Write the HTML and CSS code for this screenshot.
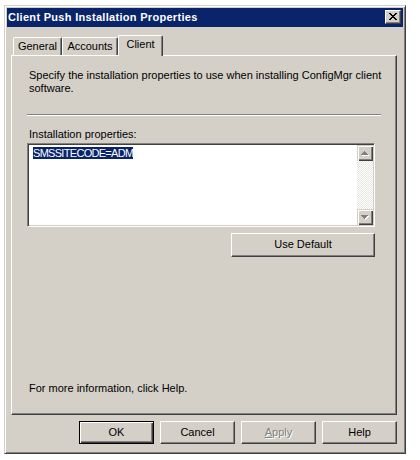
FILE: index.html
```html
<!DOCTYPE html>
<html lang="en">
<head>
    <meta charset="UTF-8">
    <title>Client Push Installation Properties</title>
    <link rel="stylesheet" href="styles.css">
</head>
<body>
    <div class="window">
        <div class="titlebar">
            <span class="title">Client Push Installation Properties</span>
            <div class="close-btn">
                <svg width="8" height="7" viewBox="0 0 8 7"><path fill="#000" d="M0 0h2v1H0zM6 0h2v1H6zM1 1h2v1H1zM5 1h2v1H5zM2 2h4v1H2zM3 3h2v1H3zM2 4h4v1H2zM1 5h2v1H1zM5 5h2v1H5zM0 6h2v1H0zM6 6h2v1H6z"/></svg>
            </div>
        </div>

        <div class="tabs">
            <div class="tab tab-general">General</div>
            <div class="tab tab-accounts">Accounts</div>
            <div class="tab tab-client active">Client</div>
        </div>

        <div class="panel">
            <p class="intro">Specify the installation properties to use when installing ConfigMgr client software.</p>
            <div class="separator"></div>
            <div class="label">Installation properties:</div>
            <div class="editbox">
                <div class="edit-text"><span class="selected">SMSSITECODE=ADM</span></div>
                <div class="scrollbar">
                    <div class="scroll-btn">
                        <svg width="16" height="16" viewBox="0 0 16 16">
                            <path fill="#fff" transform="translate(1 1)" d="M7 6h1v1h1v1h1v1h1v1H4V9h1V8h1V7h1z"/>
                            <path fill="#808080" d="M7 6h1v1h1v1h1v1h1v1H4V9h1V8h1V7h1z"/>
                        </svg>
                    </div>
                    <div class="scroll-track"></div>
                    <div class="scroll-btn">
                        <svg width="16" height="16" viewBox="0 0 16 16">
                            <path fill="#fff" transform="translate(1 1)" d="M4 6h7v1h-1v1h-1v1h-1v1H7V9H6V8H5V7H4z"/>
                            <path fill="#808080" d="M4 6h7v1h-1v1h-1v1h-1v1H7V9H6V8H5V7H4z"/>
                        </svg>
                    </div>
                </div>
            </div>
            <div class="btn btn-wide">Use Default</div>
            <p class="info">For more information, click Help.</p>
        </div>

        <div class="buttons">
            <div class="btn btn-default">OK</div>
            <div class="btn">Cancel</div>
            <div class="btn disabled"><u>A</u>pply</div>
            <div class="btn">Help</div>
        </div>
    </div>
</body>
</html>
```

FILE: styles.css
```css
body {
    margin: 0;
    background-color: #fff;
    font-family: 'Liberation Sans', Arial, sans-serif;
    font-size: 11px;
    line-height: 13px;
    color: #000;
}
.window {
    box-sizing: border-box;
    width: 402px;
    height: 449px;
    margin: 5px 0 0 4px;
    padding: 2px;
    background-color: #d4d0c8;
    border: 1px solid;
    border-color: #d4d0c8 #404040 #404040 #d4d0c8;
    box-shadow: inset 1px 1px #fff, inset -1px -1px #808080;
}
.titlebar {
    height: 19px;
    background-color: #0a246a;
    display: flex;
    align-items: center;
    justify-content: space-between;
    padding: 0 2px 0 1px;
}
.title {
    color: #fff;
    font-weight: bold;
    line-height: 19px;
    letter-spacing: 0.3px;
}
.close-btn {
    box-sizing: border-box;
    width: 16px;
    height: 14px;
    margin-bottom: 1px;
    background-color: #d4d0c8;
    border: 1px solid;
    border-color: #fff #404040 #404040 #fff;
    box-shadow: inset -1px -1px #808080;
    display: flex;
    align-items: center;
    justify-content: center;
    padding: 0 1px 1px 0;
}
.close-btn svg {
    display: block;
}

/* tabbladen */
.tabs {
    display: flex;
    align-items: flex-end;
    height: 20px;
    margin: 8px 0 0 6px;
}
.tab {
    box-sizing: border-box;
    height: 18px;
    padding-top: 2px;
    text-align: center;
    background-color: #d4d0c8;
    border-top: 1px solid #fff;
    border-left: 1px solid #fff;
    border-right: 1px solid #404040;
    border-radius: 2px 2px 0 0;
    box-shadow: inset -1px 0 #808080;
}
.tab-general { width: 49px; }
.tab-accounts { width: 56px; }
.tab-client { width: 45px; }
.tab.active {
    height: 21px;
    margin-bottom: -1px;
    position: relative;
    z-index: 1;
}

.panel {
    box-sizing: border-box;
    width: 386px;
    height: 360px;
    margin-left: 4px;
    padding: 13px 0 19px 15px;
    display: flex;
    flex-direction: column;
    border: 1px solid;
    border-color: #fff #404040 #404040 #fff;
    box-shadow: inset -1px -1px #808080;
}
.intro {
    margin: 0 0 0 2px;
    width: 355px;
}
.separator {
    width: 354px;
    margin-top: 19px;
    border-top: 1px solid #808080;
    border-bottom: 1px solid #fff;
}
.label {
    margin: 12px 0 0 2px;
}
.editbox {
    box-sizing: border-box;
    width: 348px;
    height: 84px;
    margin-top: 2px;
    background-color: #fff;
    border: 1px solid;
    border-color: #808080 #fff #fff #808080;
    box-shadow: inset 1px 1px #404040, inset -1px -1px #d4d0c8;
    padding: 1px;
    display: flex;
}
.edit-text {
    flex: 1;
    padding: 2px 0 0 4px;
}
.selected {
    background-color: #0a246a;
    color: #fff;
    letter-spacing: -0.7px;
}
.scrollbar {
    width: 16px;
    display: flex;
    flex-direction: column;
}
.scroll-btn {
    width: 16px;
    height: 16px;
    background-color: #d4d0c8;
    box-shadow: inset 1px 1px #d4d0c8, inset 2px 2px #fff, inset -1px -1px #404040, inset -2px -2px #808080;
}
.scroll-btn svg {
    display: block;
}
.scroll-track {
    flex: 1;
    background: repeating-conic-gradient(#e8e6e1 0 25%, #fff 0 50%) 0 0 / 2px 2px;
}

/* knoppen */
.btn {
    box-sizing: border-box;
    width: 75px;
    height: 23px;
    line-height: 20px;
    text-align: center;
    background-color: #d4d0c8;
    border: 1px solid;
    border-color: #fff #404040 #404040 #fff;
    box-shadow: inset -1px -1px #808080;
}
.btn-wide {
    width: 144px;
    height: 24px;
    line-height: 21px;
    margin: 6px 0 0 204px;
}
.btn-default {
    border-color: #000;
    box-shadow: inset 1px 1px #fff, inset -1px -1px #404040, inset -2px -2px #808080;
}
.btn.disabled {
    color: #808080;
    text-shadow: 1px 1px #fff;
}
.info {
    margin: auto 0 0 2px;
}
.buttons {
    display: flex;
    justify-content: flex-end;
    gap: 6px;
    margin-top: 6px;
    padding-right: 6px;
}
```
